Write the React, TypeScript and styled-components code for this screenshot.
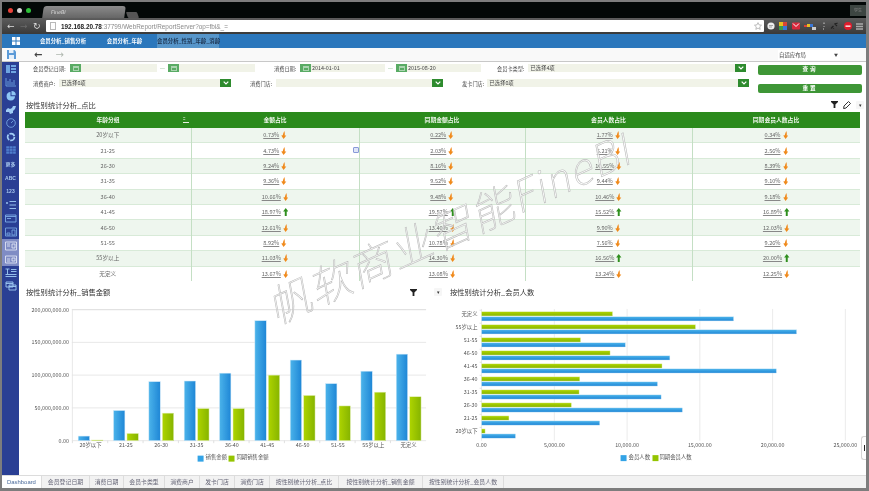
import React from 'react';
import styled, { createGlobalStyle } from 'styled-components';

const CJK = `"Noto Sans CJK SC", "Liberation Sans", sans-serif`;

const GlobalStyle = createGlobalStyle`
  html, body { margin: 0; padding: 0; background: #fff; }
  body { font-family: ${CJK}; }
  * { box-sizing: border-box; }
`;

const Frame = styled.div`
  position: relative;
  width: 869px;
  height: 491px;
  padding: 2px 3px 3px 2px;
  background: #7d7d7d;
  display: flex;
  flex-direction: column;
  overflow: hidden;
  filter: blur(0.3px);
`;

/* browser chrome */
const TabStrip = styled.div`
  height: 16px;
  background: #030807;
  display: flex;
  align-items: flex-end;
  padding-left: 6px;
  position: relative;
`;
const Lights = styled.div`
  display: flex;
  gap: 4px;
  align-self: center;
  margin-right: 10px;
`;
const Light = styled.i<{ $c: string }>`
  width: 5px;
  height: 5px;
  border-radius: 50%;
  background: ${(p) => p.$c};
`;
const BrowserTab = styled.div`
  width: 82px;
  height: 12px;
  margin-left: 2px;
  background: linear-gradient(#8b8b8b, #666);
  border-radius: 3px 3px 0 0;
  transform: skewX(-8deg);
  color: #ddd;
  font-size: 5px;
  line-height: 12px;
  padding-left: 8px;
`;
const NewTab = styled.div`
  width: 11px;
  height: 6px;
  margin-left: 2px;
  background: #555;
  border-radius: 1px;
  transform: skewX(20deg);
`;
const UserBadge = styled.div`
  position: absolute;
  right: 0;
  top: 3px;
  width: 16px;
  height: 11px;
  background: #3d4642;
  color: #888;
  font-size: 4px;
  line-height: 11px;
  text-align: center;
`;
const BrowserBar = styled.div`
  height: 16px;
  background: linear-gradient(#5c5c5c, #3a3a3a);
  display: flex;
  align-items: center;
  padding: 0 3px 0 5px;
`;
const NavGlyph = styled.span<{ $dim?: boolean }>`
  width: 13px;
  color: ${(p) => (p.$dim ? '#6a6a6a' : '#ddd')};
  font-size: 9px;
  line-height: 1;
  font-family: "DejaVu Sans", sans-serif;
`;
const UrlField = styled.div`
  flex: 1;
  height: 12px;
  background: #fff;
  border-radius: 1px;
  display: flex;
  align-items: center;
  padding: 0 2px;
  font-family: "Liberation Sans", sans-serif;
  font-size: 6.4px;
  color: #8a8a8a;
`;
const PageIcon = styled.i`
  width: 6px;
  height: 8px;
  margin: 0 5px 0 2px;
  border: 1px solid #b8b8b8;
  background: #fdfdfd;
  flex: none;
`;
const UrlHost = styled.b`
  color: #222;
  font-weight: 700;
`;
const Extensions = styled.div`
  display: flex;
  align-items: center;
  gap: 4.5px;
  margin-left: 3px;
`;

/* app nav */
const Nav = styled.div`
  height: 14px;
  background: #2b77bc;
  display: flex;
  align-items: stretch;
  padding-left: 10px;
`;
const NavItem = styled.div<{ $active?: boolean; $w: number }>`
  width: ${(p) => p.$w}px;
  background: ${(p) => (p.$active ? '#5796ca' : 'transparent')};
  color: ${(p) => (p.$active ? '#1c3350' : '#fff')};
  font-size: 5.4px;
  font-weight: 700;
  line-height: 14px;
  text-align: center;
  white-space: nowrap;
`;
const Toolbar = styled.div`
  height: 14px;
  background: #f9f9f9;
  border-bottom: 1px solid #c8c8c8;
  display: flex;
  align-items: center;
  padding-left: 5px;
  position: relative;
`;
const ToolArrow = styled.span<{ $dim?: boolean }>`
  font-family: "DejaVu Sans", sans-serif;
  font-size: 10px;
  line-height: 1;
  font-weight: ${(p) => (p.$dim ? 400 : 700)};
  color: ${(p) => (p.$dim ? '#b0b8b0' : '#444')};
  margin-left: ${(p) => (p.$dim ? 13 : 18)}px;
`;
const LayoutSelect = styled.div`
  margin-left: auto;
  margin-right: 26px;
  width: 62px;
  height: 10px;
  background: #fff;
  display: flex;
  justify-content: space-between;
  align-items: center;
  padding: 0 2px 0 1px;
  font-size: 5.4px;
  color: #444;
`;

/* body */
const Body = styled.div`
  flex: 1;
  min-height: 0;
  display: flex;
  background: #fff;
`;
const Sidebar = styled.div`
  width: 17px;
  background: #2a3f94;
  display: flex;
  flex-direction: column;
`;
const SideItem = styled.div<{ $active?: boolean }>`
  height: 13.6px;
  display: flex;
  align-items: center;
  justify-content: center;
  background: ${(p) => (p.$active ? '#7f8cc4' : 'transparent')};
  color: #a8c8ee;
  font-size: 5px;
  font-weight: 700;
  font-family: "Liberation Sans", ${CJK};
`;
const Main = styled.div`
  flex: 1;
  min-width: 0;
  padding: 0 6px;
  display: flex;
  flex-direction: column;
`;

/* filters */
const Filters = styled.div`
  height: 35px;
  display: flex;
  position: relative;
`;
const FilterRows = styled.div`
  flex: 1;
  display: flex;
  flex-direction: column;
  gap: 5px;
  padding: 1px 0 0 8px;
`;
const FilterRow = styled.div`
  display: flex;
  align-items: center;
  height: 10px;
`;
const Label = styled.span<{ $w: number; $ml?: number }>`
  width: ${(p) => p.$w}px;
  margin-left: ${(p) => p.$ml ?? 0}px;
  font-size: 5.2px;
  color: #444;
  white-space: nowrap;
`;
const Field = styled.div<{ $w: number }>`
  width: ${(p) => p.$w}px;
  height: 8px;
  background: #f1f3e8;
  font-size: 5.4px;
  line-height: 8px;
  color: #444;
  padding-left: 1px;
  white-space: nowrap;
  overflow: hidden;
`;
const DateBtn = styled.div`
  width: 11px;
  height: 8px;
  background: #59ab64;
  display: flex;
  align-items: center;
  justify-content: center;
  flex: none;
`;
const DateGlyph = styled.i`
  width: 6px;
  height: 5px;
  border: 1px solid #cfe6d0;
  border-top-width: 2px;
  opacity: 0.7;
`;
const Dash = styled.span<{ $w: number }>`
  width: ${(p) => p.$w}px;
  text-align: center;
  color: #8fbf95;
  font-size: 6px;
  line-height: 8px;
`;
const ComboBtn = styled.div`
  width: 11px;
  height: 8px;
  background: #2e8b2e;
  color: #fff;
  display: flex;
  align-items: center;
  justify-content: center;
  flex: none;
`;
const FilterButtons = styled.div`
  width: 104px;
  margin-right: -2px;
  display: flex;
  flex-direction: column;
  gap: 9px;
  padding-top: 3px;
`;
const GreenButton = styled.div`
  height: 9.5px;
  background: #3e9636;
  border-radius: 2px;
  color: #fff;
  font-size: 5.6px;
  font-weight: 700;
  line-height: 9.5px;
  text-align: center;
  letter-spacing: 2px;
`;

/* table */
const TitleRow = styled.div`
  height: 15px;
  margin-right: -4px;
  display: flex;
  align-items: center;
  padding-left: 1px;
  gap: 5px;
`;
const Title = styled.div`
  font-size: 7.3px;
  color: #333;
  flex: 1;
  white-space: nowrap;
`;
const Table = styled.table`
  width: 835px;
  border-collapse: collapse;
  table-layout: fixed;
`;
const HeadCell = styled.th`
  height: 15.5px;
  padding: 0;
  background: #2b8a1c;
  color: #f2f8ee;
  font-size: 5.8px;
  font-weight: 700;
  position: relative;
`;
const Row = styled.tr<{ $odd: boolean }>`
  height: 15.4px;
  background: ${(p) => (p.$odd ? '#eef6ee' : '#fff')};
  border-bottom: 1px solid #d8ead8;
  &:last-child { border-bottom: none; }
`;
const Cell = styled.td`
  padding: 0;
  border-left: 1px solid #c4dfc4;
  font-size: 5.6px;
  color: #666;
  text-align: center;
  &:first-child { border-left: none; }
`;
const Value = styled.span`
  display: inline-flex;
  align-items: center;
  gap: 2px;
  u { text-decoration-color: #888; }
`;
const SortIcon = styled.span`
  position: absolute;
  right: 2px;
  top: 4px;
  width: 6px;
  height: 7px;
  border-bottom: 1px solid #e8f2e0;
  color: #e8f2e0;
  font-size: 4px;
  line-height: 4px;
  text-align: left;
`;
const FloatIcon = styled.span`
  position: absolute;
  left: 353px;
  top: 147px;
  width: 6px;
  height: 6px;
  border: 1px solid #8899d8;
  background: #dfe5f8;
  border-radius: 1px;
`;

/* charts */
const Charts = styled.div`
  flex: 1;
  display: flex;
  min-height: 0;
`;
const ChartPanel = styled.div<{ $w?: number }>`
  width: ${(p) => (p.$w ? `${p.$w}px` : 'auto')};
  flex: ${(p) => (p.$w ? 'none' : '1')};
  display: flex;
  flex-direction: column;
  padding-top: 4px;
`;
const ChartHead = styled.div<{ $pr?: number }>`
  height: 14px;
  display: flex;
  align-items: center;
  gap: 8px;
  padding-left: 1px;
  padding-right: ${(p) => p.$pr ?? 0}px;
`;
const DropBtn = styled.span`
  width: 8px;
  height: 8px;
  background: #f6f6f6;
  border-radius: 1px;
  color: #333;
  font-size: 5px;
  line-height: 8px;
  text-align: center;
  flex: none;
`;
const ChartSvg = styled.svg`
  display: block;
  flex: 1;
  min-height: 0;
  width: 100%;
  text {
    font-family: ${CJK};
    font-size: 5.4px;
    fill: #555;
  }
`;
const Handle = styled.div`
  position: absolute;
  right: 3px;
  top: 436px;
  width: 5px;
  height: 24px;
  background: #fff;
  border: 1px solid #d5d5d5;
  border-right: none;
  border-radius: 3px 0 0 3px;
  display: flex;
  align-items: center;
  justify-content: center;
  &::after {
    content: '';
    width: 1px;
    height: 6px;
    background: #222;
  }
`;

/* bottom tabs */
const SheetTabs = styled.div`
  height: 13px;
  background: #f2f2f2;
  display: flex;
  border-top: 1px solid #dcdcdc;
`;
const SheetTab = styled.div<{ $w: number; $active?: boolean }>`
  width: ${(p) => p.$w}px;
  background: ${(p) => (p.$active ? '#fff' : 'transparent')};
  border-right: 1px solid #dcdcdc;
  color: ${(p) => (p.$active ? '#4a6a9a' : '#667')};
  font-size: 5.9px;
  font-family: "Liberation Sans", ${CJK};
  line-height: 12px;
  text-align: center;
  white-space: nowrap;
`;

const Watermark = styled.div`
  position: absolute;
  left: 268px;
  top: 287px;
  font-family: ${CJK};
  font-size: 43px;
  font-style: italic;
  font-weight: 100;
  letter-spacing: 1.5px;
  line-height: 1;
  white-space: nowrap;
  color: rgba(255, 255, 255, 0.8);
  -webkit-text-stroke: 0.6px #bcbcbc;
  transform: rotate(-24.5deg);
  transform-origin: 0 50%;
  pointer-events: none;
`;

/* small drawings */
const Funnel = () => (
  <svg width="7" height="7" viewBox="0 0 7 7">
    <path d="M0 0H7V1L4.4 3.4V7H2.6V3.4L0 1Z" fill="#222" />
  </svg>
);
const Pen = () => (
  <svg width="8" height="8" viewBox="0 0 8 8">
    <path d="M5.5.5 7.5 2.5 3 7 .6 7.6 1 5Z" fill="none" stroke="#333" strokeWidth="1" />
  </svg>
);
const Chevron = () => (
  <svg width="6" height="4" viewBox="0 0 6 4">
    <path d="M.7.7 3 3 5.3.7" fill="none" stroke="#fff" strokeWidth="1.2" />
  </svg>
);
const Arrow = ({ up }: { up: boolean }) =>
  up ? (
    <svg width="5.5" height="8" viewBox="0 0 6 9">
      <path d="M3 0 6 4H4.1V9H1.9V4H0Z" fill="#2f8f1e" />
    </svg>
  ) : (
    <svg width="5.5" height="8" viewBox="0 0 6 9">
      <path d="M3.6 0C4.4 1.8 4.2 3.6 4.1 5H5.9L2.8 9 .2 5.2 1.9 4.9C2.2 3.4 2.7 1.6 3.6 0Z" fill="#f08a1c" />
    </svg>
  );

const sideIcons: React.ReactNode[] = [
  <path d="M1 1H5V9H1ZM6 1H11V3H6ZM6 4H11V6H6ZM6 7H11V9H6Z" fill="#6ea4e2" />,
  <path d="M1 1V9H11M3 8V4M5 8V2M7 8V5M9 8V3" fill="none" stroke="#6ea4e2" strokeWidth=".9" />,
  <path d="M5.5 1A4.2 4.2 0 1 0 10 5.2H5.5ZM6.5 0V4.2H10.8A4.3 4.3 0 0 0 6.5 0Z" fill="#8fc6f4" />,
  <path d="M1 5 3 3 5 4 7 3 8 1 11 1 10 4 8 6 8 8 5 9 4 7 1 7Z" fill="#a0ccf5" />,
  <g fill="none" stroke="#7daee8" strokeWidth=".8"><circle cx="6" cy="5" r="4.3" /><path d="M6 5 8.4 2.6" /></g>,
  <circle cx="6" cy="5" r="3.4" fill="none" stroke="#a0ccf5" strokeWidth="1.7" strokeDasharray="6 1" />,
  <path d="M1 1H11V9H1ZM1 3.6H11M1 6.3H11M4.4 1V9M7.7 1V9" fill="#4f7fcd" stroke="#2a3f94" strokeWidth=".5" />,
  '更多',
  'ABC',
  '123',
  <path d="M1 3H3M2 2V4M4.5 1.5H11M4.5 5H11M4.5 8.5H11" fill="none" stroke="#a0ccf5" strokeWidth=".9" />,
  <path d="M.5 2H11V9H.5ZM.5 3.5H11M2 5.5H6" fill="none" stroke="#7daee8" strokeWidth=".9" />,
  <path d="M.5 1H11.5V9H.5ZM2 6H5V8H2ZM7 3H10V8H7Z" fill="none" stroke="#7daee8" strokeWidth=".8" />,
  <path d="M.5 1H11.5V9H.5ZM2 3H5M2 5H5M7 3H10V7H7Z" fill="none" stroke="#e8eefa" strokeWidth=".8" />,
  <path d="M.5 2H11.5V9H.5ZM2 5H5M2 7H5M7 4H10V7H7Z" fill="none" stroke="#e8eefa" strokeWidth=".8" />,
  <path d="M.5 1H4.5M2.5 1V6M6 1.5H11.5M6 3.5H11.5M.5 6.5H11.5M.5 8.5H11.5" fill="none" stroke="#a0ccf5" strokeWidth=".9" />,
  <path d="M1 1H8V6H1ZM4 4H11V9H4ZM1 2.5H8M4 5.5H11" fill="none" stroke="#a0ccf5" strokeWidth=".9" />,
];

const rows: [string, string, string, string, string, boolean, boolean, boolean, boolean][] = [
  ['20岁以下', '0.73%', '0.22%', '1.77%', '0.34%', false, false, false, false],
  ['21-25', '4.73%', '2.03%', '6.21%', '2.56%', false, false, false, false],
  ['26-30', '9.24%', '8.16%', '10.55%', '8.39%', false, false, false, false],
  ['31-35', '9.36%', '9.52%', '9.44%', '9.10%', false, false, false, false],
  ['36-40', '10.66%', '9.48%', '10.46%', '9.18%', false, false, false, false],
  ['41-45', '18.97%', '19.57%', '15.52%', '16.89%', true, true, true, true],
  ['46-50', '12.61%', '13.40%', '9.90%', '12.03%', false, false, false, false],
  ['51-55', '8.92%', '10.78%', '7.56%', '9.26%', false, false, false, false],
  ['55岁以上', '11.03%', '14.30%', '16.56%', '20.00%', false, false, true, true],
  ['无定义', '13.67%', '13.08%', '13.24%', '12.25%', false, false, false, false],
];

const colWidths = [166, 168, 166, 167, 168];

const ages = ['20岁以下', '21-25', '26-30', '31-35', '36-40', '41-45', '46-50', '51-55', '55岁以上', '无定义'];
const salesBlue = [7, 46, 90, 91, 103, 183, 123, 87, 106, 132];
const salesGreen = [1, 11, 42, 49, 49, 100, 69, 53, 74, 67];
const hLabels = ['无定义', '55岁以上', '51-55', '46-50', '41-45', '36-40', '31-35', '26-30', '21-25', '20岁以下'];
const hGreen = [9000, 14700, 6800, 8830, 12400, 6750, 6700, 6170, 1880, 240];
const hBlue = [17320, 21650, 9880, 12940, 20260, 12090, 12340, 13800, 8120, 2330];

const Gradients = () => (
  <defs>
    <linearGradient id="gb" x1="0" x2="1" y1="0" y2="0">
      <stop offset="0" stopColor="#4bb3ea" />
      <stop offset="1" stopColor="#1e86d6" />
    </linearGradient>
    <linearGradient id="gg" x1="0" x2="1" y1="0" y2="0">
      <stop offset="0" stopColor="#aed400" />
      <stop offset="1" stopColor="#86b400" />
    </linearGradient>
    <linearGradient id="hb" x1="0" x2="0" y1="0" y2="1">
      <stop offset="0" stopColor="#4bb3ea" />
      <stop offset="1" stopColor="#1e86d6" />
    </linearGradient>
    <linearGradient id="hg" x1="0" x2="0" y1="0" y2="1">
      <stop offset="0" stopColor="#aed400" />
      <stop offset="1" stopColor="#86b400" />
    </linearGradient>
  </defs>
);

// both charts use page coordinates through their viewBox
const SalesChart = () => {
  const y0 = 441;
  const k = 131.4 / 200;
  return (
    <ChartSvg viewBox="25 299 408 176" preserveAspectRatio="xMinYMin meet">
      <Gradients />
      {[0, 50, 100, 150, 200].map((v) => {
        const y = y0 - v * k;
        const label = v === 0 ? '0.00' : `${(v * 1000000).toLocaleString('en-US')}.00`;
        return (
          <g key={v}>
            <line x1="72" x2="427" y1={y} y2={y} stroke="#e2e2e2" strokeWidth={v === 200 ? 1.4 : 0.8} />
            <text x="69" y={y + 2} textAnchor="end">{label}</text>
          </g>
        );
      })}
      <line x1="72.5" x2="72.5" y1="309" y2="441" stroke="#e2e2e2" strokeWidth="0.8" />
      {ages.map((a, i) => {
        const x = 78.3 + i * 35.42;
        return (
          <g key={a}>
            <rect x={x} y={y0 - salesBlue[i] * k} width="11.4" height={salesBlue[i] * k} fill="url(#gb)" stroke="#cfe8f8" strokeWidth=".5" />
            <rect x={x + 13.5} y={y0 - salesGreen[i] * k} width="11.4" height={salesGreen[i] * k} fill="url(#gg)" stroke="#e4f0b8" strokeWidth=".5" />
            <line x1={72.5 + i * 35.42} x2={72.5 + i * 35.42} y1="441" y2="443.5" stroke="#ccc" strokeWidth=".6" />
            <text x={x + 12.4} y="447" textAnchor="middle">{a}</text>
          </g>
        );
      })}
      <rect x="198" y="456" width="6" height="6" fill="#33a3e6" />
      <text x="206" y="459.5">销售金额</text>
      <rect x="229" y="456" width="6" height="6" fill="#94c400" />
      <text x="237" y="459.5">同期销售金额</text>
    </ChartSvg>
  );
};

const MembersChart = () => {
  const x0 = 481.7;
  const k = 364.6 / 25000;
  return (
    <ChartSvg viewBox="433 299 427 176" preserveAspectRatio="xMinYMin meet">
      <Gradients />
      {[0, 5000, 10000, 15000, 20000, 25000].map((v) => {
        const x = x0 + v * k;
        return (
          <g key={v}>
            <line x1={x} x2={x} y1="309" y2="441" stroke="#e6e6e6" strokeWidth="0.8" />
            <text x={x} y="447" textAnchor="middle">{v === 0 ? '0.00' : `${v.toLocaleString('en-US')}.00`}</text>
          </g>
        );
      })}
      {hLabels.map((l, i) => {
        const y = 311.8 + i * 13.05;
        return (
          <g key={l}>
            <rect x={x0} y={y} width={hGreen[i] * k} height="4.2" fill="url(#hg)" stroke="#e4f0b8" strokeWidth=".4" />
            <rect x={x0} y={y + 5} width={hBlue[i] * k} height="4.2" fill="url(#hb)" stroke="#cfe8f8" strokeWidth=".4" />
            <line x1={x0 - 2} x2={x0} y1={y - 1.6} y2={y - 1.6} stroke="#ccc" strokeWidth=".6" />
            <text x={x0 - 4} y={y + 4.2} textAnchor="end">{l}</text>
          </g>
        );
      })}
      <rect x="621" y="455.5" width="6" height="6" fill="#33a3e6" />
      <text x="629" y="459.5">会员人数</text>
      <rect x="653" y="455.5" width="6" height="6" fill="#94c400" />
      <text x="660" y="459.5">同期会员人数</text>
    </ChartSvg>
  );
};

const sheetTabs: [string, number][] = [
  ['会员登记日期', 48],
  ['消费日期', 34],
  ['会员卡类型', 41],
  ['消费商户', 35],
  ['发卡门店', 35],
  ['消费门店', 35],
  ['按性别统计分析_点比', 69],
  ['按性别统计分析_销售金额', 84],
  ['按性别统计分析_会员人数', 81],
];

const App = () => (
  <Frame>
    <GlobalStyle />
    <TabStrip>
      <Lights>
        <Light $c="#e8433a" />
        <Light $c="#d8d8d8" />
        <Light $c="#2fc23a" />
      </Lights>
      <BrowserTab>FineBI</BrowserTab>
      <NewTab />
      <UserBadge>学生</UserBadge>
    </TabStrip>
    <BrowserBar>
      <NavGlyph>←</NavGlyph>
      <NavGlyph $dim>→</NavGlyph>
      <NavGlyph>↻</NavGlyph>
      <UrlField>
        <PageIcon />
        <UrlHost>192.168.20.78</UrlHost>:37799/WebReport/ReportServer?op=fbi&amp;_=
        <svg width="8" height="8" viewBox="0 0 10 10" style={{ marginLeft: 'auto' }}>
          <path d="M5 .8 6.3 3.6 9.4 4 7.1 6.1 7.7 9.2 5 7.6 2.3 9.2 2.9 6.1.6 4 3.7 3.6Z" fill="none" stroke="#999" strokeWidth=".8" />
        </svg>
      </UrlField>
      <Extensions>
        <svg width="8" height="8" viewBox="0 0 8 8"><circle cx="4" cy="4" r="3.6" fill="#eee" /><path d="M2 3.5H6M2 5H5" stroke="#777" strokeWidth=".6" /></svg>
        <svg width="8" height="8" viewBox="0 0 8 8"><path d="M0 0H4V4H0Z" fill="#e8c020" /><path d="M4 0H8V4H4Z" fill="#d94436" /><path d="M0 4H4V8H0Z" fill="#3a9a48" /><path d="M4 4H8V8H4Z" fill="#3a78d8" /></svg>
        <svg width="8" height="8" viewBox="0 0 8 8"><rect width="8" height="7" y=".5" rx="1" fill="#d9283c" /><path d="M1 1.5 4 4.5 7 1.5" fill="none" stroke="#fff" strokeWidth="1" /></svg>
        <svg width="12" height="8" viewBox="0 0 12 8"><path d="M0 3H3V5H0Z" fill="#d94436" /><path d="M3 2H6V5H3Z" fill="#e8c020" /><path d="M6 2H9V5H6Z" fill="#3a78d8" /><path d="M8 5H12V8H8Z" fill="#ccc" /></svg>
        <svg width="5" height="8" viewBox="0 0 5 8"><path d="M3 .5V2M3 4V4.8M2 7H3" stroke="#ccc" strokeWidth="1" /></svg>
        <svg width="9" height="8" viewBox="0 0 9 8"><path d="M1 6.5 3.5 4M5 2.5 7.5 1M2 4.5 4 6.5M4.5 1.5 7 4" fill="none" stroke="#222" strokeWidth="1.2" /></svg>
        <svg width="8" height="8" viewBox="0 0 8 8"><circle cx="4" cy="4" r="4" fill="#e01c2c" /><path d="M1.5 3.5H6.5V4.8H1.5Z" fill="#fff" /></svg>
        <svg width="7" height="7" viewBox="0 0 7 7"><path d="M0 1H7M0 3.5H7M0 6H7" stroke="#aaa" strokeWidth="1.3" /></svg>
      </Extensions>
    </BrowserBar>
    <Nav>
      <svg width="8" height="14" viewBox="0 0 8 14" style={{ marginRight: 14 }}>
        <path d="M0 3H3.5V6.5H0ZM4.5 3H8V6.5H4.5ZM0 7.5H3.5V11H0ZM4.5 7.5H8V11H4.5Z" fill="#fff" />
      </svg>
      <NavItem $w={58}>会员分析_销售分析</NavItem>
      <NavItem $w={65}>会员分析_年龄</NavItem>
      <NavItem $w={62} $active>会员分析_性别_年龄_消龄</NavItem>
    </Nav>
    <Toolbar>
      <svg width="9" height="9" viewBox="0 0 9 9">
        <path d="M0 0H7.5L9 1.5V9H0Z" fill="#5c9bd8" />
        <path d="M2 0H6.5V3H2ZM2 5H7V9H2Z" fill="#e6f0fa" />
      </svg>
      <ToolArrow>←</ToolArrow>
      <ToolArrow $dim>→</ToolArrow>
      <LayoutSelect>
        自适应布局
        <span style={{ fontSize: 4 }}>▼</span>
      </LayoutSelect>
    </Toolbar>
    <Body>
      <Sidebar>
        {sideIcons.map((icon, i) => (
          <SideItem key={i} $active={i === 13 || i === 14}>
            {typeof icon === 'string' ? icon : (
              <svg width="12" height="10" viewBox="0 0 12 10">{icon}</svg>
            )}
          </SideItem>
        ))}
      </Sidebar>
      <Main>
        <Filters>
          <FilterRows>
            <FilterRow>
              <Label $w={37}>会员登记日期:</Label>
              <DateBtn><DateGlyph /></DateBtn>
              <Field $w={76} />
              <Dash $w={11}>—</Dash>
              <DateBtn><DateGlyph /></DateBtn>
              <Field $w={76} />
              <Label $w={26} $ml={19}>消费日期:</Label>
              <DateBtn><DateGlyph /></DateBtn>
              <Field $w={74}>2014-01-01</Field>
              <Dash $w={11}>—</Dash>
              <DateBtn><DateGlyph /></DateBtn>
              <Field $w={74}>2015-08-20</Field>
              <Label $w={31} $ml={16}>会员卡类型:</Label>
              <Field $w={207}>&nbsp;已选择4项</Field>
              <ComboBtn><Chevron /></ComboBtn>
            </FilterRow>
            <FilterRow>
              <Label $w={26}>消费商户:</Label>
              <Field $w={161}>&nbsp;已选择0项</Field>
              <ComboBtn><Chevron /></ComboBtn>
              <Label $w={26} $ml={19}>消费门店:</Label>
              <Field $w={156} />
              <ComboBtn><Chevron /></ComboBtn>
              <Label $w={25} $ml={19}>发卡门店:</Label>
              <Field $w={251}>&nbsp;已选择0项</Field>
              <ComboBtn><Chevron /></ComboBtn>
            </FilterRow>
          </FilterRows>
          <FilterButtons>
            <GreenButton>查询</GreenButton>
            <GreenButton>重置</GreenButton>
          </FilterButtons>
        </Filters>
        <TitleRow>
          <Title>按性别统计分析_点比</Title>
          <Funnel />
          <Pen />
          <DropBtn>▾</DropBtn>
        </TitleRow>
        <Table>
          <colgroup>
            {colWidths.map((w, i) => <col key={i} style={{ width: w }} />)}
          </colgroup>
          <thead>
            <tr>
              <HeadCell>年龄分组<SortIcon>=</SortIcon></HeadCell>
              <HeadCell>金额占比</HeadCell>
              <HeadCell>同期金额占比</HeadCell>
              <HeadCell>会员人数占比</HeadCell>
              <HeadCell>同期会员人数占比</HeadCell>
            </tr>
          </thead>
          <tbody>
            {rows.map((r, i) => (
              <Row key={r[0]} $odd={i % 2 === 0}>
                <Cell>{r[0]}</Cell>
                {[1, 2, 3, 4].map((c) => (
                  <Cell key={c}>
                    <Value>
                      <u>{r[c] as string}</u>
                      <Arrow up={r[c + 4] as boolean} />
                    </Value>
                  </Cell>
                ))}
              </Row>
            ))}
          </tbody>
        </Table>
        <Charts>
          <ChartPanel $w={408}>
            <ChartHead $pr={16}>
              <Title>按性别统计分析_销售金额</Title>
              <Funnel />
            </ChartHead>
            <SalesChart />
          </ChartPanel>
          <ChartPanel>
            <ChartHead>
              <DropBtn>▾</DropBtn>
              <Title>按性别统计分析_会员人数</Title>
            </ChartHead>
            <MembersChart />
          </ChartPanel>
        </Charts>
      </Main>
    </Body>
    <SheetTabs>
      <SheetTab $w={40} $active>Dashboard</SheetTab>
      {sheetTabs.map(([t, w]) => (
        <SheetTab key={t} $w={w}>{t}</SheetTab>
      ))}
    </SheetTabs>
    <FloatIcon />
    <Handle />
    <Watermark>帆软商业智能FineBI</Watermark>
  </Frame>
);

export default App;
